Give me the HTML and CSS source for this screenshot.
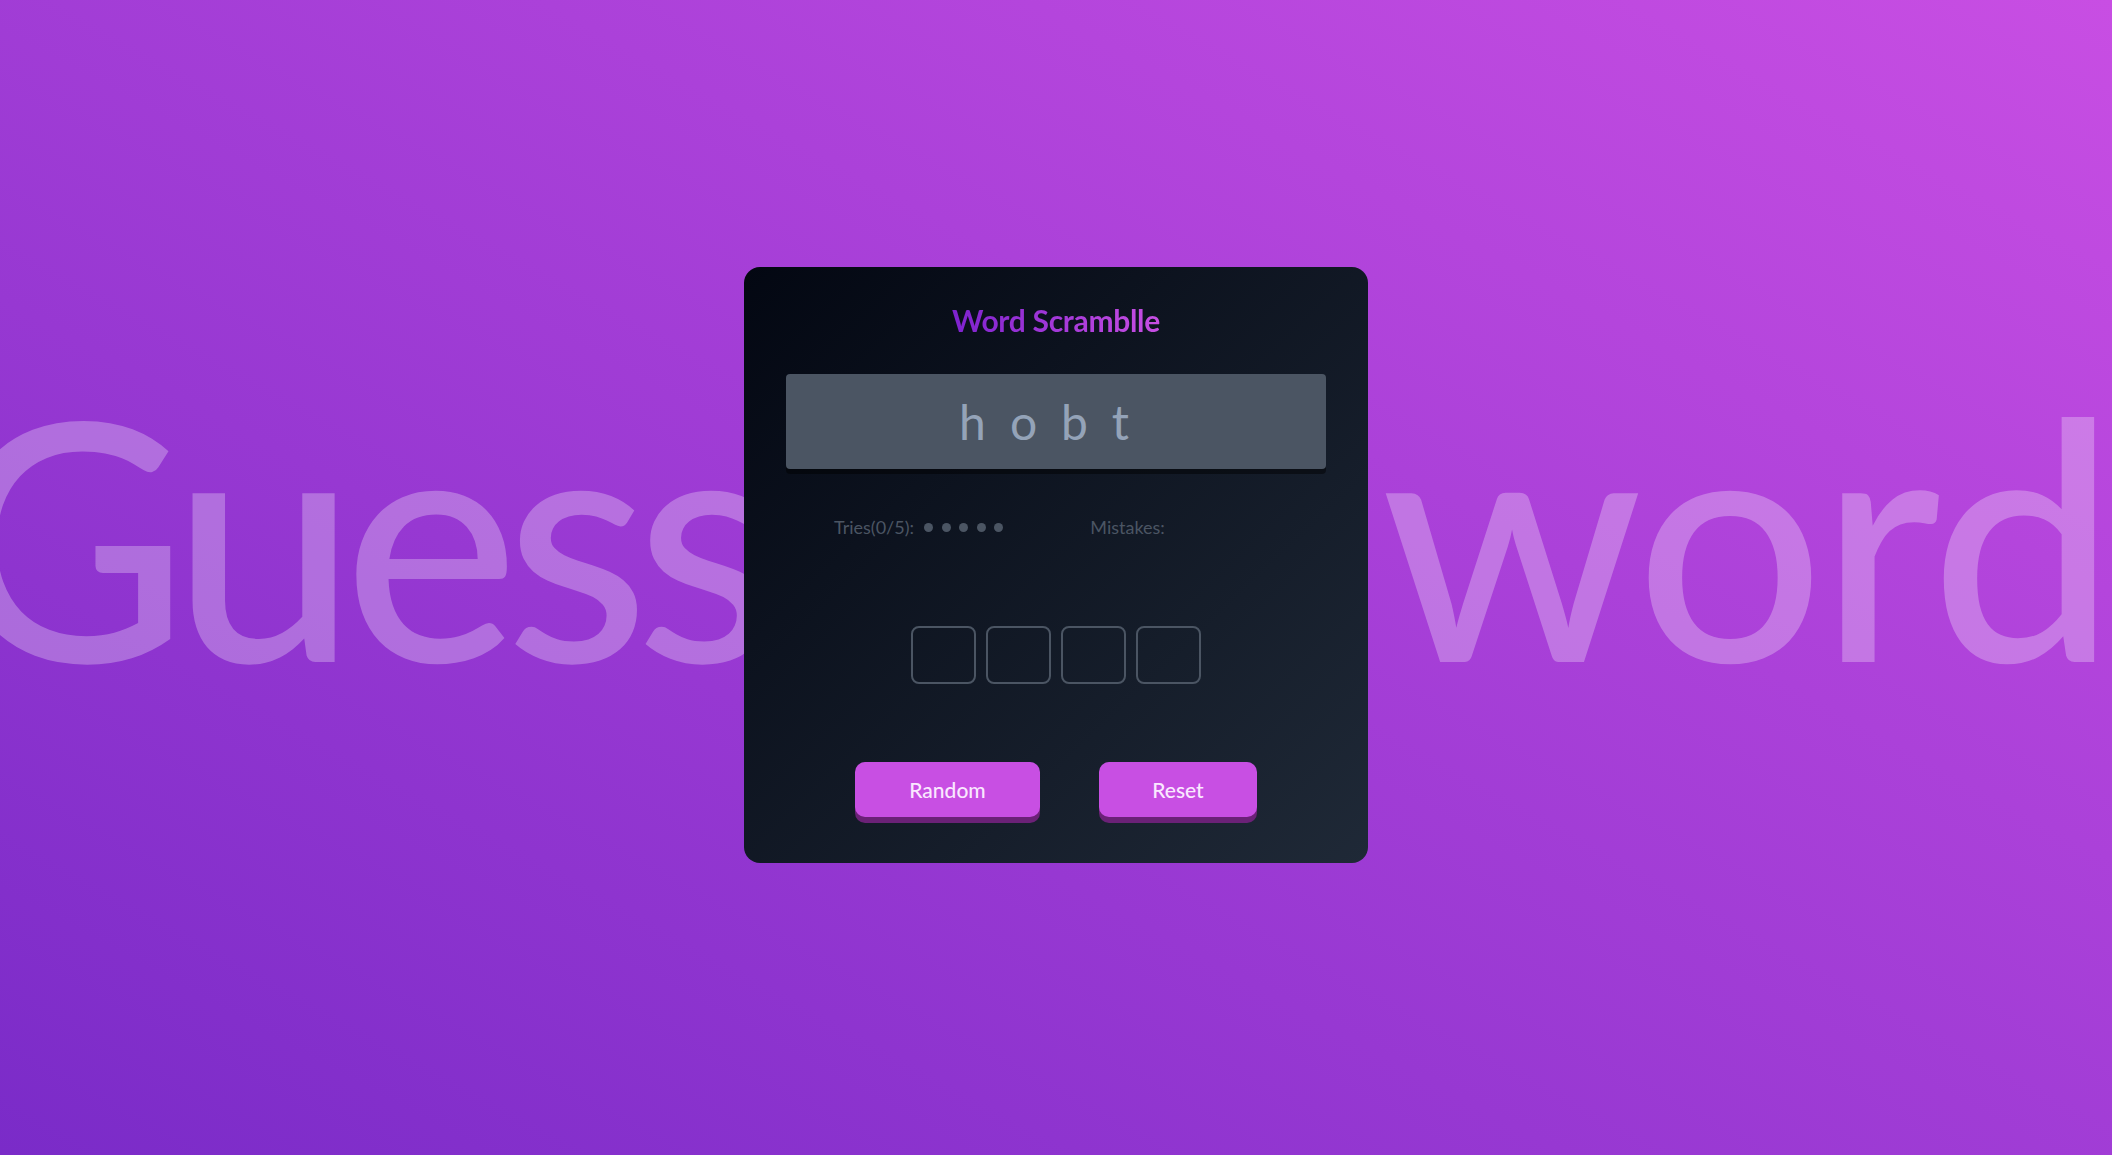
FILE: index.html
```html
<!DOCTYPE html>
<html lang="en">
<head>
<meta charset="utf-8">
<title>Word Scramblle</title>
<link rel="stylesheet" href="styles.css">
</head>
<body>
<main class="stage">
  <div class="backdrop" aria-hidden="true"><span class="backdrop-text">Guess the <span class="backdrop-word">word</span></span></div>
  <section class="card">
    <h1 class="title">Word Scramblle</h1>
    <div class="scrambled">hobt</div>
    <div class="status">
      <div class="tries">
        <span class="label">Tries(0/5):</span>
        <span class="dots"><i class="dot"></i><i class="dot"></i><i class="dot"></i><i class="dot"></i><i class="dot"></i></span>
      </div>
      <div class="mistakes"><span class="label">Mistakes:</span></div>
    </div>
    <div class="slots">
      <input class="slot" type="text" maxlength="1">
      <input class="slot" type="text" maxlength="1">
      <input class="slot" type="text" maxlength="1">
      <input class="slot" type="text" maxlength="1">
    </div>
    <div class="actions">
      <button class="btn btn-random">Random</button>
      <button class="btn btn-reset">Reset</button>
    </div>
  </section>
</main>
</body>
</html>
```

FILE: styles.css
```css
* { box-sizing: border-box; }
html, body { margin: 0; padding: 0; height: 100%; }
body {
  font-family: "Lato", "Noto Sans", sans-serif;
  background: linear-gradient(to top right, #7a2bc8, #c84ee3);
  overflow: hidden;
}
.stage {
  display: grid;
  grid-template-columns: 100%;
  grid-template-rows: 100%;
  width: 100vw;
  height: 100vh;
  overflow: hidden;
}
.backdrop {
  grid-area: 1 / 1;
  display: flex;
  align-items: center;
  justify-content: center;
  min-width: 0;
  overflow: visible;
  padding-bottom: 88px;
  padding-right: 54px;
}
.backdrop-text {
  flex: none;
  font-size: 332px;
  line-height: 1;
  font-weight: 500;
  white-space: nowrap;
  color: rgba(255, 255, 255, 0.28);
  letter-spacing: -14px;
  word-spacing: 18px;
}
.backdrop-word { letter-spacing: -5px; }
.card {
  grid-area: 1 / 1;
  align-self: center;
  justify-self: center;
  position: relative;
  width: 624px;
  margin-bottom: 25px;
  padding: 35px 42px 46px;
  border-radius: 16px;
  background: linear-gradient(to bottom right, #030712, #1f2937);
  display: flex;
  flex-direction: column;
  align-items: stretch;
}
.title {
  margin: 0;
  font-size: 30px;
  line-height: 36px;
  font-weight: 700;
  text-align: center;
  align-self: center;
  background: linear-gradient(to right, #7e22ce, #c84fe3);
  -webkit-background-clip: text;
  background-clip: text;
  color: transparent;
  letter-spacing: -0.3px;
}
.scrambled {
  margin-top: 36px;
  height: 95px;
  background: #4b5563;
  border-radius: 4px;
  box-shadow: 0 5px 0 rgba(0, 0, 0, 0.45);
  display: flex;
  align-items: center;
  justify-content: center;
  font-size: 48px;
  line-height: 1;
  letter-spacing: 24px;
  color: #94a3b8;
}
.status {
  margin-top: 46px;
  height: 24px;
  display: flex;
  align-items: center;
  gap: 87px;
  padding-left: 48px;
  font-size: 18px;
  line-height: 24px;
  color: #4b5563;
}
.tries { display: flex; align-items: center; gap: 10px; }
.dots { display: flex; gap: 8.6px; }
.dot {
  display: block;
  width: 9px;
  height: 9px;
  border-radius: 50%;
  background: #4b5563;
}
.slots {
  margin-top: 87px;
  display: flex;
  justify-content: center;
  gap: 10px;
}
.slot {
  width: 65px;
  height: 58px;
  border: 2px solid #4b5563;
  border-radius: 8px;
  background: transparent;
  outline: none;
  color: #e5e7eb;
  font: inherit;
  font-size: 28px;
  text-align: center;
  padding: 0;
}
.actions {
  margin-top: 78px;
  display: flex;
  justify-content: center;
  gap: 59px;
}
.btn {
  height: 55px;
  border: 0;
  border-radius: 10px;
  background: #c84fe3;
  color: #fae8ff;
  font-family: inherit;
  font-size: 21px;
  font-weight: 500;
  box-shadow: 0 6px 0 #6b2177;
  cursor: pointer;
}
.btn-random { width: 185px; }
.btn-reset { width: 158px; }
```
